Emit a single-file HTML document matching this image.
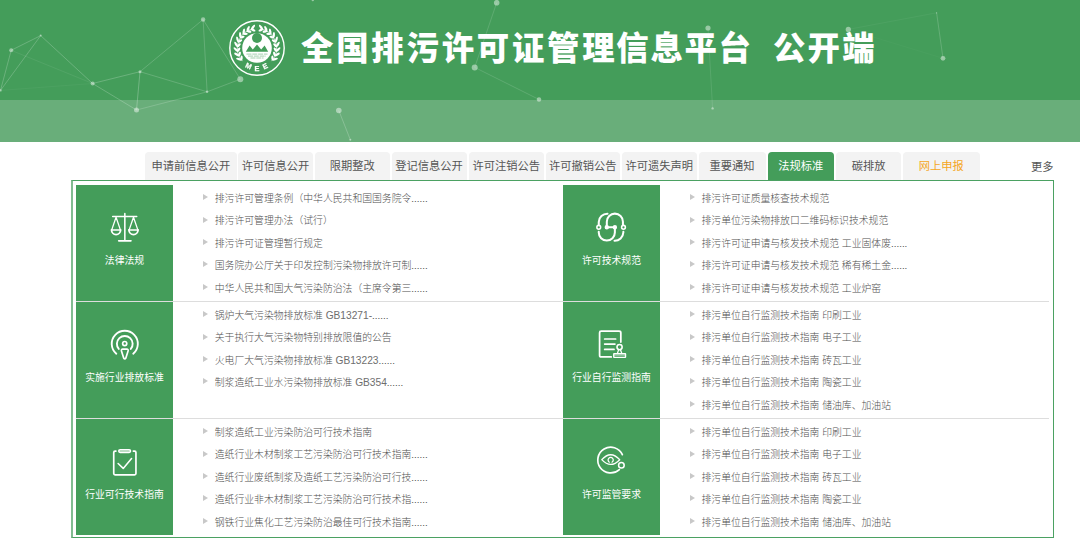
<!DOCTYPE html>
<html lang="zh-CN"><head><meta charset="utf-8"><title>全国排污许可证管理信息平台 公开端</title>
<style>
html,body{margin:0;padding:0;background:#fff}
body{width:1080px;height:542px;position:relative;overflow:hidden;font-family:"Liberation Sans","Noto Sans CJK SC",sans-serif;color:#555}
.ab{position:absolute}
.hd1{left:0;top:0;width:1080px;height:100px;background:#449d5a}
.hd2{left:0;top:100px;width:1080px;height:41.5px;background:#69ae7a}
.title{left:301px;top:23.5px;height:50px;line-height:50px;font-size:32.4px;font-weight:900;color:#fff;white-space:nowrap;letter-spacing:2.77px}
.tab{top:152px;height:28px;line-height:29.4px;background:#f3f3f3;border-radius:4px 4px 0 0;text-align:center;font-size:11.25px;color:#555;white-space:nowrap}
.tab.on{background:#449d5a;color:#fff}
.tab.org{color:#f5a623}
.more{left:1031px;top:153px;height:28px;line-height:28px;font-size:11.25px;color:#555}
.panel{left:71px;top:180px;width:980px;height:356px;border:1px solid #4ba162;border-left:2px solid #82bc91}
.box{width:97px;background:#449d5a}
.lbl{width:97px;text-align:center;font-size:9.84px;line-height:14px;height:14px;color:#fff;white-space:nowrap}
.div{left:76px;width:973px;height:1px;background:#ddd}
.it{font-size:9.84px;line-height:14px;height:14px;color:#4f4f4f;font-weight:300;white-space:nowrap}
.la{font-size:10.2px;color:#6e6e6e}
.tri{width:0;height:0;border-left:5.4px solid #c8c8c8;border-top:3.6px solid transparent;border-bottom:3.6px solid transparent}
</style></head><body>
<div class="ab hd1"></div><div class="ab hd2"></div>
<svg class="ab" style="left:0;top:0" width="1080" height="142" viewBox="0 0 1080 142"><line x1="11.2" y1="50.3" x2="40.7" y2="35.6" stroke="#fff" stroke-opacity="0.3" stroke-width="0.7"/><line x1="11.2" y1="50.3" x2="0.5" y2="90.4" stroke="#fff" stroke-opacity="0.3" stroke-width="0.7"/><line x1="40.7" y1="35.6" x2="0.5" y2="90.4" stroke="#fff" stroke-opacity="0.3" stroke-width="0.7"/><line x1="40.7" y1="35.6" x2="92.6" y2="83.5" stroke="#fff" stroke-opacity="0.3" stroke-width="0.7"/><line x1="11.2" y1="50.3" x2="92.6" y2="83.5" stroke="#fff" stroke-opacity="0.1" stroke-width="0.7"/><line x1="0.5" y1="90.4" x2="92.6" y2="83.5" stroke="#fff" stroke-opacity="0.06" stroke-width="0.7"/><line x1="92.6" y1="83.5" x2="140" y2="71.7" stroke="#fff" stroke-opacity="0.3" stroke-width="0.7"/><line x1="92.6" y1="83.5" x2="136.5" y2="110" stroke="#fff" stroke-opacity="0.3" stroke-width="0.7"/><line x1="140" y1="71.7" x2="136.5" y2="110" stroke="#fff" stroke-opacity="0.35" stroke-width="0.7"/><line x1="140" y1="71.7" x2="203.1" y2="19.5" stroke="#fff" stroke-opacity="0.25" stroke-width="0.7"/><line x1="140" y1="71.7" x2="207.1" y2="91.8" stroke="#fff" stroke-opacity="0.25" stroke-width="0.7"/><line x1="136.5" y1="110" x2="207.1" y2="91.8" stroke="#fff" stroke-opacity="0.25" stroke-width="0.7"/><line x1="203.1" y1="19.5" x2="207.1" y2="91.8" stroke="#fff" stroke-opacity="0.25" stroke-width="0.7"/><line x1="203.1" y1="19.5" x2="240.3" y2="79.2" stroke="#fff" stroke-opacity="0.25" stroke-width="0.7"/><line x1="207.1" y1="91.8" x2="240.3" y2="79.2" stroke="#fff" stroke-opacity="0.25" stroke-width="0.7"/><line x1="496.7" y1="2.7" x2="474.7" y2="67.4" stroke="#fff" stroke-opacity="0.2" stroke-width="0.7"/><line x1="474.7" y1="67.4" x2="539" y2="99.5" stroke="#fff" stroke-opacity="0.2" stroke-width="0.7"/><line x1="338.8" y1="110.5" x2="350.3" y2="139.7" stroke="#fff" stroke-opacity="0.3" stroke-width="0.7"/><line x1="708" y1="28" x2="712.6" y2="108.4" stroke="#fff" stroke-opacity="0.15" stroke-width="0.7"/><line x1="848.3" y1="29.4" x2="936.6" y2="12.8" stroke="#fff" stroke-opacity="0.07" stroke-width="0.7"/><line x1="936.6" y1="12.8" x2="943" y2="58.3" stroke="#fff" stroke-opacity="0.25" stroke-width="0.7"/><line x1="848.3" y1="29.4" x2="943" y2="58.3" stroke="#fff" stroke-opacity="0.04" stroke-width="0.7"/><circle cx="11.2" cy="50.3" r="2" fill="#fff" fill-opacity="0.45"/><circle cx="40.7" cy="35.6" r="1" fill="#fff" fill-opacity="0.45"/><circle cx="0.5" cy="90.4" r="1.2" fill="#fff" fill-opacity="0.45"/><circle cx="92.6" cy="83.5" r="2" fill="#fff" fill-opacity="0.45"/><circle cx="140" cy="71.7" r="1.5" fill="#fff" fill-opacity="0.45"/><circle cx="136.5" cy="110" r="2.5" fill="#fff" fill-opacity="0.45"/><circle cx="203.1" cy="19.5" r="2.2" fill="#fff" fill-opacity="0.45"/><circle cx="207.1" cy="91.8" r="1.2" fill="#fff" fill-opacity="0.45"/><circle cx="240.3" cy="79.2" r="3" fill="#fff" fill-opacity="0.45"/><circle cx="496.7" cy="2.7" r="2.8" fill="#fff" fill-opacity="0.45"/><circle cx="474.7" cy="67.4" r="3" fill="#fff" fill-opacity="0.45"/><circle cx="539" cy="99.5" r="2.2" fill="#fff" fill-opacity="0.45"/><circle cx="338.8" cy="110.5" r="2.8" fill="#fff" fill-opacity="0.45"/><circle cx="350.3" cy="139.7" r="1" fill="#fff" fill-opacity="0.45"/><circle cx="708" cy="28" r="2.6" fill="#fff" fill-opacity="0.45"/><circle cx="712.6" cy="108.4" r="1.2" fill="#fff" fill-opacity="0.45"/><circle cx="848.3" cy="29.4" r="2.6" fill="#fff" fill-opacity="0.45"/><circle cx="936.6" cy="12.8" r="0.6" fill="#fff" fill-opacity="0.45"/><circle cx="943" cy="58.3" r="2.4" fill="#fff" fill-opacity="0.45"/><circle cx="312.8" cy="0" r="1.2" fill="#fff" fill-opacity="0.45"/></svg>
<svg class="ab" style="left:226.8px;top:18.200000000000003px;will-change:transform" width="60" height="60" viewBox="-30 -30 60 60"><circle r="27.2" fill="none" stroke="#fff" stroke-width="1.4"/><path d="M-14.57 13.11A19.6 19.6 0 0 1 -3.40 -19.30" fill="none" stroke="#fff" stroke-width="0.7"/><ellipse cx="-18.04" cy="11.18" rx="3.00" ry="1.15" fill="#fff" transform="rotate(-161.8 -18.04 11.18)"/><ellipse cx="-15.40" cy="9.93" rx="2.40" ry="1.15" fill="#fff" transform="rotate(-87.8 -15.40 9.93)"/><ellipse cx="-20.20" cy="6.53" rx="3.00" ry="1.15" fill="#fff" transform="rotate(-148.0 -20.20 6.53)"/><ellipse cx="-17.33" cy="5.95" rx="2.40" ry="1.15" fill="#fff" transform="rotate(-74.0 -17.33 5.95)"/><ellipse cx="-21.17" cy="1.50" rx="3.00" ry="1.15" fill="#fff" transform="rotate(-134.1 -21.17 1.50)"/><ellipse cx="-18.25" cy="1.62" rx="2.40" ry="1.15" fill="#fff" transform="rotate(-60.1 -18.25 1.62)"/><ellipse cx="-20.92" cy="-3.61" rx="3.00" ry="1.15" fill="#fff" transform="rotate(-120.3 -20.92 -3.61)"/><ellipse cx="-18.11" cy="-2.80" rx="2.40" ry="1.15" fill="#fff" transform="rotate(-46.3 -18.11 -2.80)"/><ellipse cx="-19.44" cy="-8.52" rx="3.00" ry="1.15" fill="#fff" transform="rotate(-106.4 -19.44 -8.52)"/><ellipse cx="-16.91" cy="-7.06" rx="2.40" ry="1.15" fill="#fff" transform="rotate(-32.4 -16.91 -7.06)"/><ellipse cx="-16.83" cy="-12.93" rx="3.00" ry="1.15" fill="#fff" transform="rotate(-92.5 -16.83 -12.93)"/><ellipse cx="-14.72" cy="-10.90" rx="2.40" ry="1.15" fill="#fff" transform="rotate(-18.5 -14.72 -10.90)"/><ellipse cx="-13.25" cy="-16.59" rx="3.00" ry="1.15" fill="#fff" transform="rotate(-78.7 -13.25 -16.59)"/><ellipse cx="-11.68" cy="-14.11" rx="2.40" ry="1.15" fill="#fff" transform="rotate(-4.7 -11.68 -14.11)"/><ellipse cx="-8.88" cy="-19.28" rx="3.00" ry="1.15" fill="#fff" transform="rotate(-64.8 -8.88 -19.28)"/><ellipse cx="-7.96" cy="-16.50" rx="2.40" ry="1.15" fill="#fff" transform="rotate(9.2 -7.96 -16.50)"/><ellipse cx="-4.01" cy="-20.85" rx="3.00" ry="1.15" fill="#fff" transform="rotate(-50.9 -4.01 -20.85)"/><ellipse cx="-3.78" cy="-17.93" rx="2.40" ry="1.15" fill="#fff" transform="rotate(23.1 -3.78 -17.93)"/><path d="M14.57 13.11A19.6 19.6 0 0 0 3.40 -19.30" fill="none" stroke="#fff" stroke-width="0.7"/><ellipse cx="18.04" cy="11.18" rx="3.00" ry="1.15" fill="#fff" transform="rotate(-18.2 18.04 11.18)"/><ellipse cx="15.40" cy="9.93" rx="2.40" ry="1.15" fill="#fff" transform="rotate(-92.2 15.40 9.93)"/><ellipse cx="20.20" cy="6.53" rx="3.00" ry="1.15" fill="#fff" transform="rotate(-32.0 20.20 6.53)"/><ellipse cx="17.33" cy="5.95" rx="2.40" ry="1.15" fill="#fff" transform="rotate(-106.0 17.33 5.95)"/><ellipse cx="21.17" cy="1.50" rx="3.00" ry="1.15" fill="#fff" transform="rotate(-45.9 21.17 1.50)"/><ellipse cx="18.25" cy="1.62" rx="2.40" ry="1.15" fill="#fff" transform="rotate(-119.9 18.25 1.62)"/><ellipse cx="20.92" cy="-3.61" rx="3.00" ry="1.15" fill="#fff" transform="rotate(-59.7 20.92 -3.61)"/><ellipse cx="18.11" cy="-2.80" rx="2.40" ry="1.15" fill="#fff" transform="rotate(-133.8 18.11 -2.80)"/><ellipse cx="19.44" cy="-8.52" rx="3.00" ry="1.15" fill="#fff" transform="rotate(-73.6 19.44 -8.52)"/><ellipse cx="16.91" cy="-7.06" rx="2.40" ry="1.15" fill="#fff" transform="rotate(-147.6 16.91 -7.06)"/><ellipse cx="16.83" cy="-12.93" rx="3.00" ry="1.15" fill="#fff" transform="rotate(-87.5 16.83 -12.93)"/><ellipse cx="14.72" cy="-10.90" rx="2.40" ry="1.15" fill="#fff" transform="rotate(-161.5 14.72 -10.90)"/><ellipse cx="13.25" cy="-16.59" rx="3.00" ry="1.15" fill="#fff" transform="rotate(-101.3 13.25 -16.59)"/><ellipse cx="11.68" cy="-14.11" rx="2.40" ry="1.15" fill="#fff" transform="rotate(-175.3 11.68 -14.11)"/><ellipse cx="8.88" cy="-19.28" rx="3.00" ry="1.15" fill="#fff" transform="rotate(-115.2 8.88 -19.28)"/><ellipse cx="7.96" cy="-16.50" rx="2.40" ry="1.15" fill="#fff" transform="rotate(170.8 7.96 -16.50)"/><ellipse cx="4.01" cy="-20.85" rx="3.00" ry="1.15" fill="#fff" transform="rotate(-129.1 4.01 -20.85)"/><ellipse cx="3.78" cy="-17.93" rx="2.40" ry="1.15" fill="#fff" transform="rotate(156.9 3.78 -17.93)"/><circle r="14.8" fill="#fff"/><circle cx="0" cy="-10" r="5" fill="#449d5a"/><path d="M-11.2 3.8L-7.4 -2.4L-4.2 1.6L0 -3.4L4.2 1.6L7.6 -2.4L11.2 3.8Z" fill="#449d5a"/><path d="M-10.5 6.1H10.5M-9 8.1H9M-6.5 10H6.5" stroke="#449d5a" stroke-width="0.5" stroke-dasharray="5 0.8" fill="none"/><text font-family="Liberation Sans, sans-serif" font-size="7.3" font-weight="bold" fill="#fff" stroke="#fff" stroke-width="0.25" text-anchor="middle" transform="translate(-9.51 20.39) rotate(25)">M</text><text font-family="Liberation Sans, sans-serif" font-size="7.3" font-weight="bold" fill="#fff" stroke="#fff" stroke-width="0.25" text-anchor="middle" transform="translate(0.00 22.50) rotate(0)">E</text><text font-family="Liberation Sans, sans-serif" font-size="7.3" font-weight="bold" fill="#fff" stroke="#fff" stroke-width="0.25" text-anchor="middle" transform="translate(9.33 20.47) rotate(-24.5)">E</text></svg>
<div class="ab title">全国排污许可证管<span style="letter-spacing:1.67px">理信息平台</span></div><div class="ab title" style="left:773px;letter-spacing:2.2px">公开端</div>
<div class="ab tab " style="left:145px;width:91.75px">申请前信息公开</div>
<div class="ab tab " style="left:238.25px;width:74.75px">许可信息公开</div>
<div class="ab tab " style="left:315px;width:74.5px">限期整改</div>
<div class="ab tab " style="left:391.5px;width:75.25px">登记信息公开</div>
<div class="ab tab " style="left:468.75px;width:75.0px">许可注销公告</div>
<div class="ab tab " style="left:545.5px;width:74.5px">许可撤销公告</div>
<div class="ab tab " style="left:622px;width:74.75px">许可遗失声明</div>
<div class="ab tab " style="left:698.75px;width:66.75px">重要通知</div>
<div class="ab tab on" style="left:767.5px;width:66.5px">法规标准</div>
<div class="ab tab " style="left:836.25px;width:65.0px">碳排放</div>
<div class="ab tab org" style="left:903.25px;width:76.25px">网上申报</div>
<div class="ab more">更多</div>
<div class="ab panel"></div>
<div class="ab box" style="left:76px;top:185px;height:116px"></div>
<svg class="ab" style="left:76px;top:210px" width="100" height="70" viewBox="0 0 774 542"><g fill="none" stroke="#fff" stroke-width="11" stroke-linecap="round" stroke-linejoin="round">
<path d="M284 50H470M378 28V238M330 239H426" stroke-width="12"/>
<path d="M310 56L277 152M310 56L343 152M445 56L412 152M445 56L478 152" stroke-width="10"/>
<path d="M275 155H345M410 155H480" stroke-width="11"/>
<path d="M275 155A35 35 0 0 0 345 155M410 155A35 35 0 0 0 480 155" stroke-width="14"/></g></svg>
<div class="ab lbl" style="left:76px;top:253.89999999999998px">法律法规</div>
<div class="ab tri" style="left:202.5px;top:194.2px"></div><div class="ab it" style="left:214.8px;top:191.9px">排污许可管理条例（中华人民共和国国务院令......</div>
<div class="ab tri" style="left:202.5px;top:216.6px"></div><div class="ab it" style="left:214.8px;top:214.3px">排污许可管理办法（试行）</div>
<div class="ab tri" style="left:202.5px;top:239.0px"></div><div class="ab it" style="left:214.8px;top:236.7px">排污许可证管理暂行规定</div>
<div class="ab tri" style="left:202.5px;top:261.4px"></div><div class="ab it" style="left:214.8px;top:259.1px">国务院办公厅关于印发控制污染物排放许可制......</div>
<div class="ab tri" style="left:202.5px;top:283.79999999999995px"></div><div class="ab it" style="left:214.8px;top:281.5px">中华人民共和国大气污染防治法（主席令第三......</div>
<div class="ab box" style="left:563px;top:185px;height:116px"></div>
<svg class="ab" style="left:590px;top:208px" width="44" height="38" viewBox="0 0 628 542"><g fill="none" stroke="#fff" stroke-width="29" stroke-linecap="round" stroke-linejoin="round">
<path d="M125 338V350A115 115 0 0 0 355 350V275H240V195A115 115 0 0 1 470 195V238"/>
<path d="M250 82A122 122 0 0 0 125 200V238"/>
<path d="M476 338V350A124 124 0 0 1 350 468"/>
<circle cx="125" cy="275" r="27" stroke-width="22"/><circle cx="478" cy="275" r="27" stroke-width="22"/>
<circle cx="240" cy="275" r="17" fill="#fff"/><circle cx="355" cy="275" r="17" fill="#fff"/></g></svg>
<div class="ab lbl" style="left:563px;top:253.89999999999998px">许可技术规范</div>
<div class="ab tri" style="left:689.5px;top:194.2px"></div><div class="ab it" style="left:701.5px;top:191.9px">排污许可证质量核查技术规范</div>
<div class="ab tri" style="left:689.5px;top:216.6px"></div><div class="ab it" style="left:701.5px;top:214.3px">排污单位污染物排放口二维码标识技术规范</div>
<div class="ab tri" style="left:689.5px;top:239.0px"></div><div class="ab it" style="left:701.5px;top:236.7px">排污许可证申请与核发技术规范 工业固体废......</div>
<div class="ab tri" style="left:689.5px;top:261.4px"></div><div class="ab it" style="left:701.5px;top:259.1px">排污许可证申请与核发技术规范 稀有稀土金......</div>
<div class="ab tri" style="left:689.5px;top:283.79999999999995px"></div><div class="ab it" style="left:701.5px;top:281.5px">排污许可证申请与核发技术规范 工业炉窑</div>
<div class="ab div" style="top:301px"></div>
<div class="ab box" style="left:76px;top:302px;height:116px"></div>
<svg class="ab" style="left:76px;top:327px" width="100" height="70" viewBox="0 0 774 542"><g fill="none" stroke="#fff" stroke-width="14.5" stroke-linecap="round" stroke-linejoin="round">
<path d="M312 207A101 101 0 1 1 443 207"/>
<path d="M331 170A61 61 0 1 1 424 170"/>
<circle cx="377" cy="128" r="16" stroke-width="13"/>
<path d="M362 172H393Q407 172 403 186L386 240Q377.5 254 369 240L352 186Q348 172 362 172Z" stroke-width="13"/></g></svg>
<div class="ab lbl" style="left:76px;top:370.9px">实施行业排放标准</div>
<div class="ab tri" style="left:202.5px;top:311.2px"></div><div class="ab it" style="left:214.8px;top:308.9px">锅炉大气污染物排放标准 <span class="la">GB13271-</span>......</div>
<div class="ab tri" style="left:202.5px;top:333.59999999999997px"></div><div class="ab it" style="left:214.8px;top:331.3px">关于执行大气污染物特别排放限值的公告</div>
<div class="ab tri" style="left:202.5px;top:356.0px"></div><div class="ab it" style="left:214.8px;top:353.7px">火电厂大气污染物排放标准 <span class="la">GB13223</span>......</div>
<div class="ab tri" style="left:202.5px;top:378.4px"></div><div class="ab it" style="left:214.8px;top:376.1px">制浆造纸工业水污染物排放标准 <span class="la">GB354</span>......</div>
<div class="ab box" style="left:563px;top:302px;height:116px"></div>
<svg class="ab" style="left:590px;top:325px" width="44" height="38" viewBox="0 0 628 542"><g fill="none" stroke="#fff" stroke-width="25" stroke-linecap="round" stroke-linejoin="round">
<path d="M440 243V110Q440 87 415 87H160Q137 87 137 110V430Q137 455 160 455H303"/>
<path d="M209 200H366M209 272H356M209 348H343" stroke-width="24"/>
<circle cx="422" cy="315" r="37" stroke-width="22"/>
<path d="M409 352L393 400M435 352L452 400" stroke-width="18"/>
<rect x="339" y="410" width="168" height="52" rx="4" stroke-width="20"/>
<path d="M350 432H496" stroke-width="10" stroke-opacity="0.7"/></g></svg>
<div class="ab lbl" style="left:563px;top:370.9px">行业自行监测指南</div>
<div class="ab tri" style="left:689.5px;top:311.2px"></div><div class="ab it" style="left:701.5px;top:308.9px">排污单位自行监测技术指南 印刷工业</div>
<div class="ab tri" style="left:689.5px;top:333.59999999999997px"></div><div class="ab it" style="left:701.5px;top:331.3px">排污单位自行监测技术指南 电子工业</div>
<div class="ab tri" style="left:689.5px;top:356.0px"></div><div class="ab it" style="left:701.5px;top:353.7px">排污单位自行监测技术指南 砖瓦工业</div>
<div class="ab tri" style="left:689.5px;top:378.4px"></div><div class="ab it" style="left:701.5px;top:376.1px">排污单位自行监测技术指南 陶瓷工业</div>
<div class="ab tri" style="left:689.5px;top:400.79999999999995px"></div><div class="ab it" style="left:701.5px;top:398.5px">排污单位自行监测技术指南 储油库、加油站</div>
<div class="ab div" style="top:418px"></div>
<div class="ab box" style="left:76px;top:419px;height:115.5px"></div>
<svg class="ab" style="left:76px;top:444px" width="100" height="70" viewBox="0 0 774 542"><g fill="none" stroke="#fff" stroke-width="13" stroke-linecap="round" stroke-linejoin="round">
<path d="M309 55H302Q292 55 292 65V229Q292 239 302 239H454Q464 239 464 229V65Q464 55 454 55H444"/>
<rect x="331" y="44" width="91" height="21" rx="10.5" fill="#fff" fill-opacity="0.3" stroke-width="12"/>
<path d="M326 151L365.5 189L430 113" stroke-width="12"/></g></svg>
<div class="ab lbl" style="left:76px;top:487.9px">行业可行技术指南</div>
<div class="ab tri" style="left:202.5px;top:428.2px"></div><div class="ab it" style="left:214.8px;top:425.9px">制浆造纸工业污染防治可行技术指南</div>
<div class="ab tri" style="left:202.5px;top:450.59999999999997px"></div><div class="ab it" style="left:214.8px;top:448.3px">造纸行业木材制浆工艺污染防治可行技术指南......</div>
<div class="ab tri" style="left:202.5px;top:473.0px"></div><div class="ab it" style="left:214.8px;top:470.7px">造纸行业废纸制浆及造纸工艺污染防治可行技......</div>
<div class="ab tri" style="left:202.5px;top:495.4px"></div><div class="ab it" style="left:214.8px;top:493.1px">造纸行业非木材制浆工艺污染防治可行技术指......</div>
<div class="ab tri" style="left:202.5px;top:517.8px"></div><div class="ab it" style="left:214.8px;top:515.5px">钢铁行业焦化工艺污染防治最佳可行技术指南......</div>
<div class="ab box" style="left:563px;top:419px;height:115.5px"></div>
<svg class="ab" style="left:590px;top:442px" width="44" height="38" viewBox="0 0 628 542"><g fill="none" stroke="#fff" stroke-width="24" stroke-linecap="round" stroke-linejoin="round">
<path d="M462 180A184 184 0 1 0 419 393"/>
<circle cx="448" cy="332" r="40" stroke-width="22"/>
<path d="M168 252Q295 112 424 252Q295 388 168 252Z" stroke-width="19"/>
<path d="M276 288A37 37 0 1 1 314 288" stroke-width="18"/></g></svg>
<div class="ab lbl" style="left:563px;top:487.9px">许可监管要求</div>
<div class="ab tri" style="left:689.5px;top:428.2px"></div><div class="ab it" style="left:701.5px;top:425.9px">排污单位自行监测技术指南 印刷工业</div>
<div class="ab tri" style="left:689.5px;top:450.59999999999997px"></div><div class="ab it" style="left:701.5px;top:448.3px">排污单位自行监测技术指南 电子工业</div>
<div class="ab tri" style="left:689.5px;top:473.0px"></div><div class="ab it" style="left:701.5px;top:470.7px">排污单位自行监测技术指南 砖瓦工业</div>
<div class="ab tri" style="left:689.5px;top:495.4px"></div><div class="ab it" style="left:701.5px;top:493.1px">排污单位自行监测技术指南 陶瓷工业</div>
<div class="ab tri" style="left:689.5px;top:517.8px"></div><div class="ab it" style="left:701.5px;top:515.5px">排污单位自行监测技术指南 储油库、加油站</div>
</body></html>
